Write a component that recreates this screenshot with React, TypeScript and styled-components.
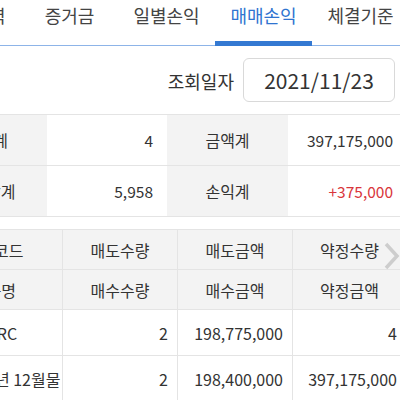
import React from 'react';
import styled, { createGlobalStyle } from 'styled-components';

const GlobalStyle = createGlobalStyle`
  html, body {
    margin: 0;
    padding: 0;
    background: #ffffff;
    overflow: hidden;
  }
  body {
    font-family: 'Noto Sans CJK KR', 'Noto Sans', sans-serif;
    color: #333333;
  }
`;

const tabs = ['거래이력', '증거금', '일별손익', '매매손익', '체결기준'];

const summary = [
  { label: '수량계', value: '4', label2: '금액계', value2: '397,175,000' },
  { label: '비용합계', value: '5,958', label2: '손익계', value2: '+375,000', profit: true },
];

const rows = [
  { name: 'KOSPI RC', sellQty: '2', sellAmt: '198,775,000', tradeQty: '4' },
  { name: 'F 2021년 12월물', sellQty: '2', sellAmt: '198,400,000', tradeQty: '397,175,000' },
];

export default function App() {
  return (
    <>
      <GlobalStyle />
      <Page>
        <TabBar>
          {tabs.map((t) => (
            <Tab key={t} $active={t === '매매손익'}>
              {t}
            </Tab>
          ))}
        </TabBar>

        <DateRow>
          <DateLabel>조회일자</DateLabel>
          <DateBox>2021/11/23</DateBox>
        </DateRow>

        <SummaryTable>
          <colgroup>
            <col style={{ width: 122 }} />
            <col style={{ width: 120 }} />
            <col style={{ width: 121 }} />
            <col />
          </colgroup>
          <tbody>
            {summary.map((s) => (
              <tr key={s.label}>
                <LabelCell>{s.label}</LabelCell>
                <ValueCell>{s.value}</ValueCell>
                <LabelCell>{s.label2}</LabelCell>
                <ValueCell $profit={s.profit}>{s.value2}</ValueCell>
              </tr>
            ))}
          </tbody>
        </SummaryTable>

        <ListWrap>
          <ListTable>
            <colgroup>
              <col style={{ width: 137 }} />
              <col style={{ width: 115 }} />
              <col style={{ width: 115 }} />
              <col />
            </colgroup>
            <thead>
              <tr>
                <HeadCell>종목코드</HeadCell>
                <HeadCell>매도수량</HeadCell>
                <HeadCell>매도금액</HeadCell>
                <HeadCell>약정수량</HeadCell>
              </tr>
              <tr>
                <HeadCell>종목명</HeadCell>
                <HeadCell>매수수량</HeadCell>
                <HeadCell>매수금액</HeadCell>
                <HeadCell>약정금액</HeadCell>
              </tr>
            </thead>
            <tbody>
              {rows.map((r) => (
                <tr key={r.name}>
                  <NameCell>{r.name}</NameCell>
                  <NumCell>{r.sellQty}</NumCell>
                  <NumCell>{r.sellAmt}</NumCell>
                  <NumCell>{r.tradeQty}</NumCell>
                </tr>
              ))}
            </tbody>
          </ListTable>
          <ScrollArrow>
            <svg width="16" height="28" viewBox="0 0 16 28">
              <polyline points="2,2 13,14 2,26" fill="none" stroke="#cdcdcd" strokeWidth="3.5" />
            </svg>
          </ScrollArrow>
        </ListWrap>
      </Page>
    </>
  );
}

const Page = styled.div`
  width: 482px;
  margin-left: -75px;
`;

const TabBar = styled.div`
  display: flex;
  align-items: flex-end;
  height: 46px;
  margin-left: -1px;
  border-bottom: 1px solid #8db4e8;
  box-sizing: border-box;
`;

const Tab = styled.div<{ $active?: boolean }>`
  flex: 0 0 97px;
  height: 46px;
  box-sizing: border-box;
  margin-bottom: -1px;
  padding-top: 3px;
  text-align: center;
  font-size: 18px;
  line-height: 24px;
  color: ${({ $active }) => ($active ? '#2f74d0' : '#444444')};
  border-bottom: ${({ $active }) => ($active ? '5px solid #3479d2' : '0')};
`;

const DateRow = styled.div`
  display: flex;
  justify-content: flex-end;
  align-items: center;
  gap: 9px;
  padding: 12px 12px 12px 0;
`;

const DateLabel = styled.span`
  font-size: 18px;
  color: #333333;
  margin-top: 1px;
`;

const DateBox = styled.div`
  width: 152px;
  height: 44px;
  box-sizing: border-box;
  border: 1px solid #d9d9d9;
  border-radius: 6px;
  display: flex;
  align-items: center;
  justify-content: center;
  font-size: 21px;
  color: #333333;
`;

const SummaryTable = styled.table`
  width: 100%;
  table-layout: fixed;
  border-collapse: collapse;
  border-top: 1px solid #e4e4e4;
  border-bottom: 1px solid #e4e4e4;
`;

const LabelCell = styled.td`
  height: 50px;
  padding: 0;
  background: #f3f3f3;
  text-align: center;
  font-size: 16px;
  color: #333333;
  border-bottom: 1px solid #e4e4e4;
`;

const ValueCell = styled.td<{ $profit?: boolean }>`
  height: 50px;
  padding: 0 14px 0 0;
  text-align: right;
  font-size: 15.5px;
  color: ${({ $profit }) => ($profit ? '#d9363b' : '#333333')};
  border-bottom: 1px solid #e4e4e4;
`;

const ListWrap = styled.div`
  position: relative;
  margin-top: 12px;
`;

const ListTable = styled.table`
  width: 100%;
  table-layout: fixed;
  border-collapse: collapse;
  border-top: 1px solid #e4e4e4;
`;

const HeadCell = styled.th`
  height: 39px;
  padding: 0;
  background: #f3f3f3;
  font-weight: normal;
  font-size: 16px;
  color: #333333;
  text-align: center;
  border: 1px solid #e4e4e4;
  border-top: 0;
`;

const NameCell = styled.td`
  height: 45px;
  padding: 0 0 0 21px;
  font-size: 16px;
  color: #333333;
  white-space: nowrap;
  overflow: hidden;
  border: 1px solid #e4e4e4;
`;

const NumCell = styled.td`
  height: 45px;
  padding: 0 9px 0 0;
  text-align: right;
  font-size: 16px;
  color: #333333;
  white-space: nowrap;
  border: 1px solid #e4e4e4;
`;

const ScrollArrow = styled.div`
  position: absolute;
  top: 13px;
  left: 459px;
`;
